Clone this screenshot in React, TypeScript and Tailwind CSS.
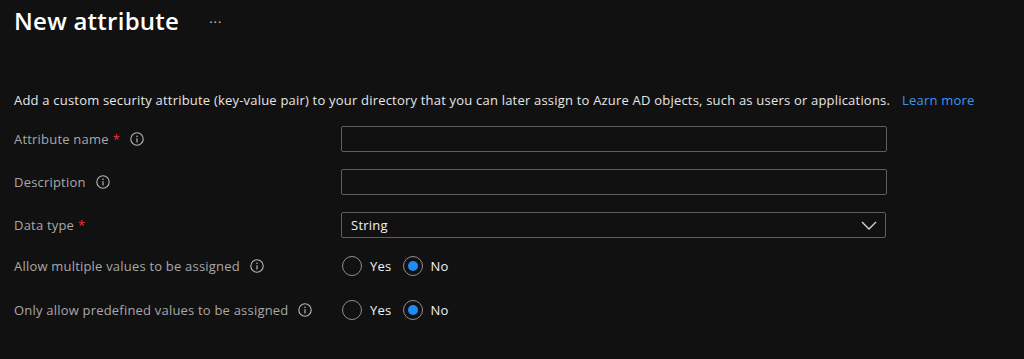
import React from 'react';

function InfoIcon() {
  return (
    <svg width="14" height="14" viewBox="0 0 14 14" className="shrink-0">
      <circle cx="7" cy="7" r="6.2" fill="none" stroke="#b8b8b8" strokeWidth="1.1" />
      <circle cx="7" cy="4.2" r="0.8" fill="#b8b8b8" />
      <path d="M7 6.2 V10.4" stroke="#b8b8b8" strokeWidth="1.2" />
    </svg>
  );
}

function Label({ text, required, info }: { text: string; required?: boolean; info?: boolean }) {
  return (
    <div className="flex items-center text-[13px] leading-5 tracking-[0.2px] text-[#a8a8a8]">
      <span>{text}</span>
      {required && <span className="ml-[4px] text-[#f1333a]">*</span>}
      {info && (
        <span className="ml-[10px]">
          <InfoIcon />
        </span>
      )}
    </div>
  );
}

function Radio({ checked, label }: { checked?: boolean; label: string }) {
  return (
    <label className="flex items-center">
      <span className="flex h-5 w-5 items-center justify-center rounded-full border border-[#8f8f8f]">
        {checked && <span className="h-[10px] w-[10px] rounded-full bg-[#1f8cf5]" />}
      </span>
      <span className="ml-[8px] text-[13px] leading-5 tracking-[0.25px] text-[#f2f2f2]">{label}</span>
    </label>
  );
}

export default function App() {
  return (
    <div className="h-[359px] w-full overflow-hidden bg-[#111111] pl-[14px] font-['Open_Sans',sans-serif]">
      {/* header */}
      <div className="flex items-center pt-[5px]">
        <h1 className="text-[24px] font-semibold leading-8 tracking-[0.25px] text-white">New attribute</h1>
        <span className="ml-[30px] mt-[4px] text-[13px] tracking-[1px] text-[#c8c8c8]">···</span>
      </div>

      <p className="mt-[53px] text-[13px] leading-5 tracking-[0.2px] text-[#e6e6e6]">
        Add a custom security attribute (key-value pair) to your directory that you can later assign to Azure AD objects, such as users or applications.
        <a className="ml-[12px] text-[#3b96f5]">Learn more</a>
      </p>

      {/* form rows */}
      <div className="mt-[16px] flex flex-col">
        <div className="grid h-[26px] grid-cols-[327px_546px] items-center">
          <Label text="Attribute name" required info />
          <input className="h-[26px] rounded-[2px] border border-[#5f5f5f] bg-[#111111] px-[9px] text-[13px] text-white outline-none" />
        </div>

        <div className="mt-[17px] grid h-[26px] grid-cols-[327px_546px] items-center">
          <Label text="Description" info />
          <input className="h-[26px] rounded-[2px] border border-[#5f5f5f] bg-[#111111] px-[9px] text-[13px] text-white outline-none" />
        </div>

        <div className="mt-[17px] grid h-[26px] grid-cols-[327px_545px] items-center">
          <Label text="Data type" required />
          <div className="flex h-[26px] items-center justify-between rounded-[2px] border border-[#5f5f5f] pl-[9px] pr-[8px]">
            <span className="text-[13px] leading-5 tracking-[0.25px] text-[#f2f2f2]">String</span>
            <svg width="16" height="9" viewBox="0 0 16 9">
              <path d="M1 1 L8 8 L15 1" fill="none" stroke="#d8d8d8" strokeWidth="1.3" />
            </svg>
          </div>
        </div>

        <div className="mt-[18px] grid h-5 grid-cols-[327px_546px] items-center">
          <Label text="Allow multiple values to be assigned" info />
          <div className="flex items-center gap-[11px] pl-[1px]">
            <Radio label="Yes" />
            <Radio checked label="No" />
          </div>
        </div>

        <div className="mt-[24px] grid h-5 grid-cols-[327px_546px] items-center">
          <Label text="Only allow predefined values to be assigned" info />
          <div className="flex items-center gap-[11px] pl-[1px]">
            <Radio label="Yes" />
            <Radio checked label="No" />
          </div>
        </div>
      </div>
    </div>
  );
}
